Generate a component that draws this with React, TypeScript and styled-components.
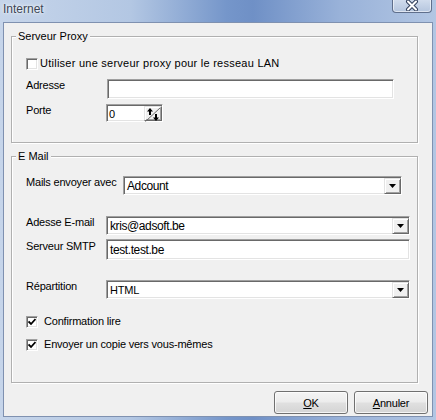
import React from "react";
import styled, { createGlobalStyle, css } from "styled-components";

const Global = createGlobalStyle`
  html, body { margin: 0; padding: 0; background: #fff; }
  body { font-family: "Liberation Sans", Arial, sans-serif; }
`;

const Window = styled.div`
  width: 436px;
  height: 420px;
  box-sizing: border-box;
  display: flex;
  flex-direction: column;
  background: linear-gradient(90deg, #c6d5ea 0%, #b3c7e3 30%, #7596ca 52%, #6f90c6 58%, #99b2d9 78%, #b2c6e3 100%);
  overflow: hidden;
`;

const TitleBar = styled.div`
  height: 22px;
  flex: none;
  display: flex;
  justify-content: space-between;
  align-items: flex-start;
  padding-left: 3px;
`;

const Title = styled.span`
  margin-top: 2px;
  font: 12px "Liberation Sans", Arial, sans-serif;
  color: #3b4556;
  text-shadow: 0 0 5px rgba(255, 255, 255, 0.9), 0 0 2px rgba(255, 255, 255, 0.9);
`;

const CloseButton = styled.div`
  width: 40px;
  height: 14px;
  margin-top: -1px;
  margin-right: 4px;
  box-sizing: border-box;
  border: 1px solid #5f6f8c;
  border-top: none;
  border-radius: 0 0 4px 4px;
  background: linear-gradient(#d3deee, #b4c5de);
  box-shadow: inset 0 0 0 1px rgba(255, 255, 255, 0.55);
  display: flex;
  align-items: center;
  justify-content: center;
`;

const Client = styled.div`
  flex: 1;
  margin: 0 3px 3px 3px;
  background: #f0f0f0;
  border: 1px solid #7f91b0;
  display: flex;
  flex-direction: column;
  padding: 13px 4px 0 7px;
  font: 11px "Liberation Sans", Arial, sans-serif;
  letter-spacing: -0.2px;
  color: #000;
`;

const Group = styled.div<{ $h: number; $pt: number; $mt?: number }>`
  position: relative;
  box-sizing: border-box;
  height: ${(p) => p.$h}px;
  margin-top: ${(p) => p.$mt ?? 0}px;
  margin-right: 10px;
  border: 1px solid #b0b0b0;
  box-shadow: 1px 1px 0 #fff, inset 1px 1px 0 #fff;
  padding: ${(p) => p.$pt}px 0 0 14px;
  display: flex;
  flex-direction: column;
`;

const Legend = styled.span`
  position: absolute;
  left: 4px;
  top: -7px;
  padding: 0 2px;
  background: #f0f0f0;
  line-height: 13px;
  letter-spacing: 0;
`;

const Row = styled.div<{ $mt?: number }>`
  display: flex;
  align-items: flex-start;
  margin-top: ${(p) => p.$mt ?? 0}px;
`;

const Label = styled.span<{ $w: number; $pt?: number }>`
  width: ${(p) => p.$w}px;
  flex: none;
  line-height: 13px;
  padding-top: ${(p) => p.$pt ?? 0}px;
  white-space: nowrap;
`;

const sunken = css`
  box-sizing: border-box;
  background: #fff;
  border: 1px solid;
  border-color: #a0a0a0 #ffffff #ffffff #a0a0a0;
  box-shadow: inset 1px 1px 0 #696969, inset -1px -1px 0 #e3e3e3;
`;

const raised = css`
  box-sizing: border-box;
  background: #f0f0f0;
  border: 1px solid;
  border-color: #e3e3e3 #696969 #696969 #e3e3e3;
  box-shadow: inset 1px 1px 0 #fff, inset -1px -1px 0 #a0a0a0;
`;

const TextField = styled.div<{ $w: number; $h: number; $fs?: number }>`
  ${sunken};
  width: ${(p) => p.$w}px;
  height: ${(p) => p.$h}px;
  padding: 0 0 0 3px;
  display: flex;
  align-items: center;
  font-size: ${(p) => p.$fs ?? 12}px;
  letter-spacing: -0.4px;
`;

const Combo = styled.div<{ $w: number }>`
  ${sunken};
  width: ${(p) => p.$w}px;
  height: 19px;
  display: flex;
  align-items: stretch;
  padding: 1px 0 0 2px;
`;

const ComboValue = styled.span<{ $fs: number }>`
  flex: 1;
  display: flex;
  align-items: center;
  font-size: ${(p) => p.$fs}px;
  letter-spacing: ${(p) => (p.$fs > 11 ? "-0.4px" : "-0.2px")};
  padding-left: 1px;
`;

const DropButton = styled.span`
  ${raised};
  width: 17px;
  flex: none;
  display: flex;
  align-items: center;
  justify-content: center;
`;

const Spinner = styled.div`
  ${sunken};
  width: 57px;
  height: 18px;
  display: flex;
  align-items: stretch;
  padding: 1px 0 0 2px;
`;

const SpinValue = styled.span`
  flex: 1;
  display: flex;
  align-items: center;
  font-size: 11px;
`;

const SpinButton = styled.span`
  ${raised};
  width: 18px;
  flex: none;
  display: flex;
`;

const CheckRow = styled.label<{ $mt?: number; $gap: number; $ls?: number }>`
  display: flex;
  align-items: center;
  gap: ${(p) => p.$gap}px;
  margin-top: ${(p) => p.$mt ?? 0}px;
  height: 13px;
  line-height: 13px;
  white-space: nowrap;
  letter-spacing: ${(p) => p.$ls ?? -0.2}px;
`;

const CheckBox = styled.span`
  ${sunken};
  width: 12px;
  height: 12px;
  flex: none;
  display: flex;
  align-items: center;
  justify-content: center;
`;

const ButtonBar = styled.div`
  display: flex;
  justify-content: flex-end;
  gap: 6px;
  margin-top: 8px;
`;

const DialogButton = styled.button`
  width: 74px;
  height: 23px;
  box-sizing: border-box;
  border: 1px solid #707070;
  border-radius: 3px;
  background: linear-gradient(#f4f4f4 0%, #ececec 48%, #e0e0e0 52%, #d4d4d4 100%);
  box-shadow: inset 0 0 0 1px rgba(255, 255, 255, 0.75);
  font: 11px "Liberation Sans", Arial, sans-serif;
  letter-spacing: -0.2px;
  color: #000;
  padding: 0;
  u { text-decoration: underline; }
`;

const Arrow = () => (
  <svg width="7" height="4" viewBox="0 0 7 4">
    <path d="M0 0h7L3.5 4z" fill="#000" />
  </svg>
);

const Check = () => (
  <svg width="8" height="8" viewBox="0 0 8 8">
    <path d="M0.5 3.5L3 6L7.5 1" fill="none" stroke="#000" strokeWidth="1.8" />
  </svg>
);

const SpinIcon = () => (
  <svg width="16" height="15" viewBox="0 0 16 15">
    <line x1="0.5" y1="14.5" x2="15.5" y2="0.5" stroke="#696969" strokeWidth="1" />
    <path d="M5 1L2 4.5h2V8h2V4.5h2z" fill="#000" />
    <path d="M11 14l3-3.5h-2V7h-2v3.5H8z" fill="#000" />
  </svg>
);

const CloseIcon = () => (
  <svg width="14" height="11" viewBox="0 0 14 11">
    <path d="M3 1.5L11 9.5M11 1.5L3 9.5" stroke="#33415c" strokeWidth="4" strokeLinecap="round" />
    <path d="M3 1.5L11 9.5M11 1.5L3 9.5" stroke="#ffffff" strokeWidth="2" strokeLinecap="round" />
  </svg>
);

export default function App() {
  return (
    <>
      <Global />
      <Window>
        <TitleBar>
          <Title>Internet</Title>
          <CloseButton>
            <CloseIcon />
          </CloseButton>
        </TitleBar>
        <Client>
          <Group $h={107} $pt={20}>
            <Legend>Serveur Proxy</Legend>
            <CheckRow $gap={2} $ls={0.25}>
              <CheckBox />
              Utiliser une serveur proxy pour le resseau LAN
            </CheckRow>
            <Row $mt={9}>
              <Label $w={81}>Adresse</Label>
              <TextField $w={287} $h={20} />
            </Row>
            <Row $mt={5}>
              <Label $w={80}>Porte</Label>
              <Spinner>
                <SpinValue>0</SpinValue>
                <SpinButton>
                  <SpinIcon />
                </SpinButton>
              </Spinner>
            </Row>
          </Group>

          <Group $h={227} $pt={19} $mt={13}>
            <Legend>E Mail</Legend>
            <Row>
              <Label $w={97}>Mails envoyer avec</Label>
              <Combo $w={279}>
                <ComboValue $fs={12}>Adcount</ComboValue>
                <DropButton>
                  <Arrow />
                </DropButton>
              </Combo>
            </Row>
            <Row $mt={21}>
              <Label $w={80}>Adesse E-mail</Label>
              <Combo $w={304}>
                <ComboValue $fs={12}>kris@adsoft.be</ComboValue>
                <DropButton>
                  <Arrow />
                </DropButton>
              </Combo>
            </Row>
            <Row $mt={4}>
              <Label $w={80} $pt={1}>Serveur SMTP</Label>
              <TextField $w={304} $h={21}>test.test.be</TextField>
            </Row>
            <Row $mt={20}>
              <Label $w={80}>Répartition</Label>
              <Combo $w={304}>
                <ComboValue $fs={11}>HTML</ComboValue>
                <DropButton>
                  <Arrow />
                </DropButton>
              </Combo>
            </Row>
            <CheckRow $mt={16} $gap={6}>
              <CheckBox>
                <Check />
              </CheckBox>
              Confirmation lire
            </CheckRow>
            <CheckRow $mt={10} $gap={6}>
              <CheckBox>
                <Check />
              </CheckBox>
              Envoyer un copie vers vous-mêmes
            </CheckRow>
          </Group>

          <ButtonBar>
            <DialogButton>
              <u>O</u>K
            </DialogButton>
            <DialogButton>
              <u>A</u>nnuler
            </DialogButton>
          </ButtonBar>
        </Client>
      </Window>
    </>
  );
}
